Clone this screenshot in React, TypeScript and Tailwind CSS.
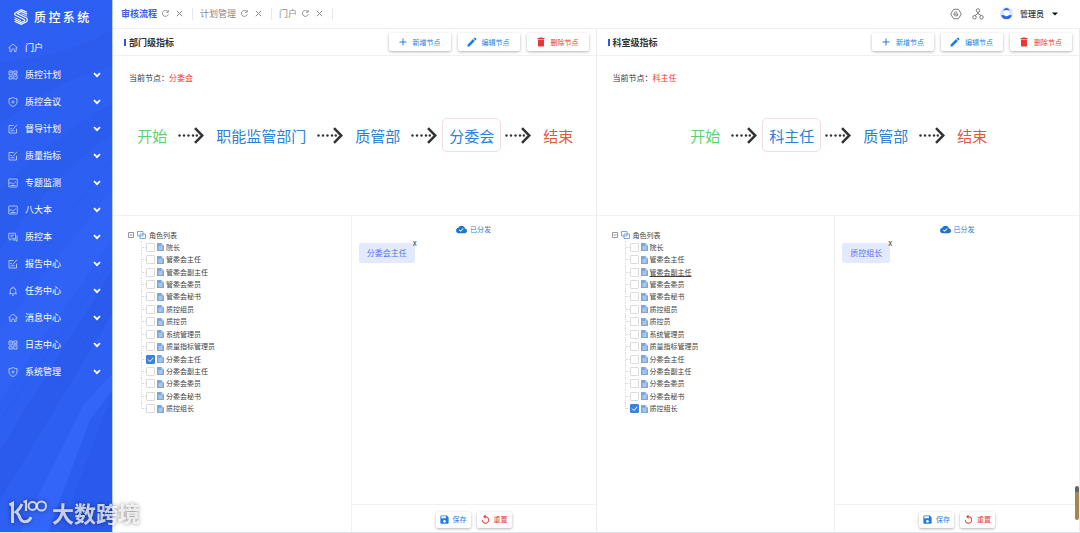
import { Fragment, useState } from 'react';
import type { ReactNode } from 'react';
import { clsx } from 'clsx';
import { MdAdd, MdCloudDone, MdDelete, MdEdit, MdReplay, MdSave } from 'react-icons/md';

type IconName = 'home' | 'grid' | 'shield' | 'edit' | 'chart' | 'chat' | 'bell';

const iconShapes: Record<IconName, ReactNode> = {
  home: <path d="M1.500 9.500 10 2l8.500 7.500h-2.300V17h-3.400v-2.500a2.800 2.800 0 0 0-5.600 0V17H3.800V9.500Z" />,
  grid: (
    <>
      <path d="M2 2h6.500v8H2zM11.500 2H18v4.500h-6.500zM11.500 9.500H18V18h-6.500zM2 13.500h6.500V18H2z" />
      <path d="M4 5.500h2.500M13.500 12.500H16" />
    </>
  ),
  shield: (
    <>
      <path d="M10 1c2.400 1.600 5 2.300 8 2.400V10c0 4.200-3.200 7.200-8 9-4.800-1.800-8-4.800-8-9V3.400C5 3.300 7.600 2.600 10 1Z" />
      <path d="M10 7v6M7 10h6" />
    </>
  ),
  edit: (
    <>
      <path d="M11.500 3H2v15h15V9.500" />
      <path d="m9.500 11 8.500-9.500M5 9h3M5 13.500h8" />
    </>
  ),
  chart: (
    <>
      <rect x="1.500" y="2" width="17" height="16" rx="1" />
      <path d="m2 10.500 4.500-1 3.500 3 6-5.500M5 15h10" />
    </>
  ),
  chat: (
    <>
      <path d="M1.500 2.500h13.500v11H7l-3 3v-3H1.500Z" />
      <path d="M18 7v11.500L15 16H9M5 6.500h7M5 9.500h4" />
    </>
  ),
  bell: (
    <>
      <path d="M2 15.500h16M4.500 15.500V9a5.500 5.500 0 0 1 11 0v6.500M10 1v2.500" />
      <path d="M8 18.500h4" />
    </>
  ),
};

const menu: { label: string; icon: IconName }[] = [
  { label: '质控计划', icon: 'grid' },
  { label: '质控会议', icon: 'shield' },
  { label: '督导计划', icon: 'edit' },
  { label: '质量指标', icon: 'edit' },
  { label: '专题监测', icon: 'chart' },
  { label: '八大本', icon: 'chart' },
  { label: '质控本', icon: 'chat' },
  { label: '报告中心', icon: 'edit' },
  { label: '任务中心', icon: 'bell' },
  { label: '消息中心', icon: 'home' },
  { label: '日志中心', icon: 'grid' },
  { label: '系统管理', icon: 'shield' },
];

const tabs = ['审核流程', '计划管理', '门户'];

const roles = [
  '院长',
  '管委会主任',
  '管委会副主任',
  '管委会委员',
  '管委会秘书',
  '质控组员',
  '质控员',
  '系统管理员',
  '质量指标管理员',
  '分委会主任',
  '分委会副主任',
  '分委会委员',
  '分委会秘书',
  '质控组长',
];

function MenuIcon({ name }: { name: IconName }) {
  return (
    <svg viewBox="0 0 20 20" className="size-[10px] shrink-0 opacity-75" fill="none" stroke="currentColor" strokeWidth="1.600" strokeLinejoin="round">
      {iconShapes[name]}
    </svg>
  );
}

function Sidebar() {
  return (
    <aside className="relative w-[113px] shrink-0 border-r border-[#b9cbfb] bg-[#2d5ff2] text-white">
      <svg className="absolute inset-0 size-full" viewBox="0 0 112 532" preserveAspectRatio="none">
        <path d="M0 62C40 60 80 48 112 30V66C80 74 40 92 0 126Z" fill="#2757e6" opacity=".3" />
        <path d="M0 190C40 150 80 120 112 104v30C76 160 36 200 0 250Z" fill="#2656e6" opacity=".3" />
        <path d="M0 330 112 190v50L0 400Z" fill="#3467f8" opacity=".5" />
        <path d="M0 450 112 270v44L0 500Z" fill="#2656e4" opacity=".4" />
        <path d="M20 532 84 404l28-30v20L60 532Z" fill="#3567fa" opacity=".8" />
        <path d="m48 532 42-112 22-30v142Z" fill="#2453e6" opacity=".4" />
        <path d="M0 420 112 262M0 470 112 300M0 300 112 160" stroke="#2452e0" strokeWidth="1" opacity=".3" />
      </svg>
      <div className="relative">
        <div className="flex h-[34px] items-center gap-[6px] pl-[14px]">
          <svg viewBox="0 0 28 32" className="h-4 w-[14px]" fill="none" stroke="currentColor" strokeWidth="2.400">
            <path d="M26 6.500 14.500 1.500 3 7.500C.500 9 .500 11 3 12.500l17 8.500c2 1 2 2.500 0 3.500l-6 2.500L1 20.500" />
            <path d="M26.500 10.500 14.500 5 7 9l17 8.500c3.500 2 3.500 6.500 0 8.500l-9.500 4.700L1 24.500" />
            <path d="M26.500 14.500 14.500 9M1 17l13 6.500" strokeWidth="1.800" />
          </svg>
          <h1 className="text-[12px] leading-none font-medium tracking-[0.2em]">质控系统</h1>
        </div>
        <nav className="text-[9px] leading-none">
          <a href="#portal" className="flex h-[27px] items-center gap-[7px] pl-2">
            <MenuIcon name="home" />
            门户
          </a>
          {menu.map((item) => (
            <button key={item.label} type="button" className="flex h-[27px] w-full items-center gap-[7px] pr-[11px] pl-2">
              <MenuIcon name={item.icon} />
              {item.label}
              <svg viewBox="0 0 8 6" className="ml-auto h-[6px] w-2" fill="none" stroke="currentColor" strokeWidth="1.800">
                <path d="m1 1.200 3 3 3-3" />
              </svg>
            </button>
          ))}
        </nav>
      </div>
    </aside>
  );
}

function Header() {
  return (
    <header className="flex h-[29px] items-center border-b border-[#f0f0f2] pb-px leading-none">
      {tabs.map((tab, i) => (
        <div key={tab} className="flex h-3 items-center border-r border-[#e8e8ec] pr-[9px] pl-[7px] text-[#8a8a8a] first:pl-2">
          <button type="button" className={clsx('text-[9px]', i === 0 && 'font-bold text-[#3a5eea]')}>
            {tab}
          </button>
          <button type="button" aria-label="刷新" className="ml-[5px]">
            <svg viewBox="0 0 14 14" className="size-[7px]" fill="none" stroke="currentColor" strokeWidth="1.800">
              <path d="M12.600 8.500A6 6 0 1 1 11.500 3M12.500 0v4.500H8" />
            </svg>
          </button>
          <button type="button" aria-label="关闭" className="ml-[7px]">
            <svg viewBox="0 0 7 7" className="size-[7px]" stroke="currentColor">
              <path d="m.800.800 5.400 5.400M6.200.800.800 6.200" />
            </svg>
          </button>
        </div>
      ))}
      <div className="ml-auto flex items-center pr-[22px] text-[#666]">
        <button type="button" aria-label="设置">
          <svg viewBox="0 0 24 24" className="size-3" fill="none" stroke="currentColor" strokeWidth="1.700" strokeLinejoin="round">
            <path d="M7.500 2.500h9L19 6l3.500 6-3.500 6-2.500 3.500h-9L5 18l-3.500-6L5 6Z" />
            <path d="M16 12a4 4 0 1 1-1.500-3.200M9.500 12H16" />
          </svg>
        </button>
        <button type="button" aria-label="组织" className="ml-[10px]">
          <svg viewBox="0 0 24 24" className="size-3" fill="none" stroke="currentColor" strokeWidth="1.700">
            <circle cx="12" cy="5" r="3.500" />
            <circle cx="5" cy="18.500" r="3.500" />
            <circle cx="19" cy="18.500" r="3.500" />
            <path d="M12 8.500V12M6 15l6-4 6 4" />
          </svg>
        </button>
        <button type="button" className="ml-4 flex items-center text-[8px] font-medium text-[#333]">
          <svg viewBox="0 0 26 26" className="size-[13px]">
            <circle cx="13" cy="13" r="13" fill="#dce5fd" />
            <path d="M7 8c0-8 12-8 12 0l-3-2h-6Z" fill="#3465f0" />
            <path d="M8 8h10v5a5 5 0 0 1-10 0Z" fill="#fff" />
            <path d="M2 17q4-2 7 0l4 2 4-2q3-2 7 0a12 12 0 0 1-22 0Z" fill="#2f62f2" />
          </svg>
          <span className="ml-[7px]">管理员</span>
          <svg viewBox="0 0 6 4" className="ml-2 h-1 w-[6px]">
            <path d="M0 .500h6L3 3.500Z" fill="#111" />
          </svg>
        </button>
      </div>
    </header>
  );
}

function ActionButton({ icon, label, danger, small }: { icon: ReactNode; label: string; danger?: boolean; small?: boolean }) {
  return (
    <button
      type="button"
      className={clsx(
        'flex items-center rounded-[2px] bg-white text-[7px] leading-none shadow-[0_1px_3px_rgba(0,0,0,0.3)]',
        small ? 'h-4 gap-[3px] pr-1 pl-[3px]' : 'h-[18px] gap-[4px] pr-[10px] pl-[8px]',
        danger ? 'text-[#e53935]' : 'text-[#1f7fe0]',
      )}
    >
      {icon}
      {label}
    </button>
  );
}

function Arrow() {
  return (
    <svg viewBox="0 0 26 17" className="mr-[5px] ml-1 h-[17px] w-[26px] shrink-0" fill="#333">
      <circle cx="1.500" cy="8.500" r="1.200" />
      <circle cx="6" cy="8.500" r="1.200" />
      <circle cx="10.500" cy="8.500" r="1.200" />
      <circle cx="15" cy="8.500" r="1.200" />
      <circle cx="18.800" cy="8.500" r="1.200" />
      <path d="m17 1.200 7.300 7.300-7.300 7.300" fill="none" stroke="#333" strokeWidth="2.500" />
    </svg>
  );
}

function Flow({ nodes, current }: { nodes: string[]; current: string }) {
  const steps = ['开始', ...nodes, '结束'];
  return (
    <div className="mt-[34px] flex items-center justify-center pl-[2px] text-[15px] leading-none whitespace-nowrap">
      {steps.map((step, i) => (
        <Fragment key={step}>
          {i > 0 && <Arrow />}
          <span
            className={clsx(
              'flex h-[34px] items-center rounded-[5px] border px-[6px]',
              step === current ? 'border-[#f6dbe0]' : 'border-transparent',
              i === 0 ? 'text-[#5bd36b]' : i === steps.length - 1 ? 'text-[#dd5a41]' : 'text-[#2b80d8]',
            )}
          >
            {step}
          </span>
        </Fragment>
      ))}
    </div>
  );
}

function RoleTree({ checked, onToggle, active }: { checked: string[]; onToggle: (role: string) => void; active?: string }) {
  return (
    <div className="pt-[13px] pl-[15px] text-[7px] leading-none text-[#444]">
      <div className="flex h-3 items-center">
        <button type="button" aria-label="收起">
          <svg viewBox="0 0 6 6" className="size-[6px]" fill="none" stroke="#999">
            <path d="M.500.500h5v5h-5ZM1.500 3h3" />
          </svg>
        </button>
        <svg viewBox="0 0 18 16" className="mr-[3px] ml-[3px] h-2 w-[9px]" fill="#fff" stroke="#6c9fdc" strokeWidth="1.800">
          <path d="M1 1h11v9H1zM6 6h11v9H6z" />
        </svg>
        <span>角色列表</span>
      </div>
      <ul className="ml-[13px] grid h-[174px] auto-rows-fr">
        {roles.map((role, i) => (
          <li key={role} className="flex">
            <span className={clsx('w-px border-l border-dotted border-[#ddd]', i === roles.length - 1 && 'h-1/2')} />
            <span className="w-1 self-center border-t border-dotted border-[#ddd]" />
            <label className="flex items-center">
              <span className="grid">
                <input
                  type="checkbox"
                  checked={checked.includes(role)}
                  onChange={() => onToggle(role)}
                  className="col-start-1 row-start-1 size-[9px] appearance-none rounded-[1px] border border-[#dcdcdc] bg-white checked:border-[#3a82e0] checked:bg-[#3a82e0]"
                />
                {checked.includes(role) && (
                  <svg viewBox="0 0 9 9" className="pointer-events-none col-start-1 row-start-1 size-[9px]" fill="none" stroke="#fff">
                    <path d="M2 4.500 4 6.500 7.200 2.800" />
                  </svg>
                )}
              </span>
              <svg viewBox="0 0 14 16" className="mr-[2px] ml-[2px] h-2 w-[7px]">
                <path d="M0 0h9l5 5v11H0Z" fill="#7ba7dc" />
                <path d="M9 0v5h5" fill="#c5d9f1" />
                <path d="M3 8h8M3 12h8" stroke="#fff" strokeWidth="1.400" />
              </svg>
              <span className={clsx(role === active && 'underline')}>{role}</span>
            </label>
          </li>
        ))}
      </ul>
    </div>
  );
}

type PanelProps = { title: string; nodes: string[]; current: string; initial: string; active?: string };

function Panel({ title, nodes, current, initial, active }: PanelProps) {
  const [checked, setChecked] = useState([initial]);
  const toggle = (role: string) =>
    setChecked((list) => (list.includes(role) ? list.filter((r) => r !== role) : [...list, role]));

  return (
    <section className="flex min-w-0 flex-col border-r border-[#ececf0]">
      <div className="flex h-[27px] items-center border-b border-[#f0f0f2] pr-[7px] pl-[11px]">
        <span className="mr-[3px] h-[7px] w-[2px] bg-[#2d55e8]" />
        <h2 className="text-[9px] leading-none font-bold text-[#333]">{title}</h2>
        <div className="ml-auto flex gap-[7px]">
          <ActionButton icon={<MdAdd className="size-3" />} label="新增节点" />
          <ActionButton icon={<MdEdit className="size-3" />} label="编辑节点" />
          <ActionButton icon={<MdDelete className="size-3" />} label="删除节点" danger />
        </div>
      </div>
      <div className="border-b border-[#f0f0f2] pb-[63px]">
        <p className="flex h-7 items-end pl-4 text-[8px] leading-[12px] text-[#333]">
          当前节点：<span className="text-[#f33]">{current}</span>
        </p>
        <Flow nodes={nodes} current={current} />
      </div>
      <div className="grid flex-1 grid-cols-[238fr_245fr]">
        <RoleTree checked={checked} onToggle={toggle} active={active} />
        <div className="flex flex-col border-l border-[#edf1f5]">
          <div className="flex h-[26px] items-center justify-center gap-[3px] text-[7px] leading-none text-[#2b80d8]">
            <MdCloudDone className="size-[11px] text-[#1976d2]" />
            已分发
          </div>
          <div className="flex flex-1 flex-wrap content-start gap-2 px-[7px] pt-px">
            {checked.map((role) => (
              <span key={role} className="relative flex h-5 items-center rounded-[2px] bg-[#e3eafe] px-2 text-[8px] leading-none text-[#5577ee]">
                {role}
                <button
                  type="button"
                  aria-label={`移除${role}`}
                  onClick={() => toggle(role)}
                  className="absolute -top-1 -right-[2px] text-[8px] leading-[8px] text-[#444]"
                >
                  x
                </button>
              </span>
            ))}
          </div>
          <div className="flex h-7 items-center justify-center gap-[6px] border-t border-[#edf1f5] pt-[2px]">
            <ActionButton icon={<MdSave className="size-[11px]" />} label="保存" small />
            <ActionButton icon={<MdReplay className="size-[11px]" />} label="重置" danger small />
          </div>
        </div>
      </div>
    </section>
  );
}

function Watermark() {
  return (
    <div className="pointer-events-none absolute bottom-[7px] left-[9px] flex items-center gap-[5px] text-white/75 drop-shadow-[0_0_2px_rgba(0,0,0,0.6)]">
      <svg viewBox="0 0 38 26" className="h-[26px] w-[38px]" fill="none" stroke="currentColor" strokeWidth="3">
        <path d="m.500 6 3-1.500V24M13 5c-2 5-4 6-6 8 2 1 3 3 4 6 2 5 9 5 11-1" />
        <path d="m14.500 3 2.500-1v10" strokeWidth="2.200" />
        <circle cx="23.500" cy="7" r="4" strokeWidth="2" />
        <circle cx="32.500" cy="7" r="4.500" strokeWidth="2" />
      </svg>
      <span className="text-[22px] leading-none font-bold">大数跨境</span>
    </div>
  );
}

export default function App() {
  return (
    <div className="relative flex min-h-screen border-b border-[#d9e6f2] bg-white font-['Noto_Sans_CJK_SC',sans-serif]">
      <Sidebar />
      <main className="flex min-w-0 flex-1 flex-col">
        <Header />
        <div className="grid flex-1 grid-cols-2">
          <Panel title="部门级指标" nodes={['职能监管部门', '质管部', '分委会']} current="分委会" initial="分委会主任" />
          <Panel title="科室级指标" nodes={['科主任', '质管部']} current="科主任" initial="质控组长" active="管委会副主任" />
        </div>
      </main>
      <div className="absolute right-px bottom-3 h-[34px] w-1 rounded-full border-t-[6px] border-[#666] bg-[#a58550]" />
      <Watermark />
    </div>
  );
}
